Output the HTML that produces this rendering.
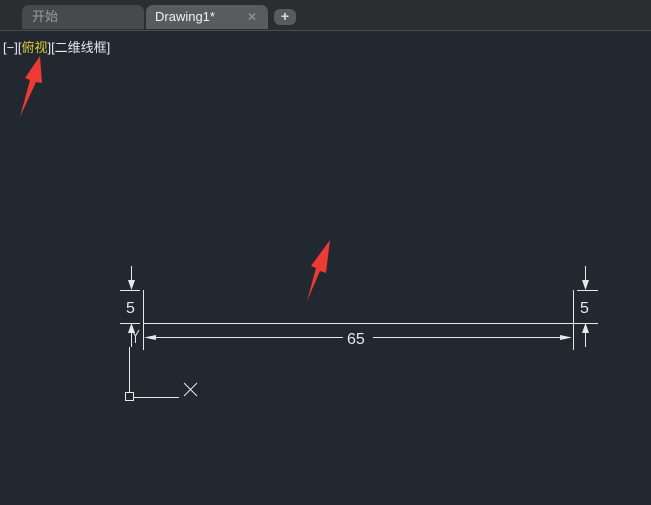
<!DOCTYPE html>
<html><head><meta charset="utf-8"><style>
body{margin:0;width:651px;height:505px;background:#212830;overflow:hidden;font-family:"Liberation Sans","Noto Sans CJK SC",sans-serif;position:relative}
.bar{position:absolute;left:0;top:0;width:651px;height:30px;background:#2b2d30;border-bottom:1px solid #4a4c50}
.tab{position:absolute;top:5px;height:24px;border-radius:7px 7px 0 0;font-size:13px;line-height:24px}
.vt{position:absolute;left:3px;top:37px;font-size:13px;color:#e8e8e8;white-space:nowrap}
</style></head><body>
<div class="bar">
<div class="tab" style="left:22px;width:122px;background:#47494c;color:#9a9a9a;padding-left:10px;box-sizing:border-box">开始</div>
<div class="tab" style="left:146px;width:122px;background:#595b5e;color:#f0f0f0;padding-left:9px;box-sizing:border-box">Drawing1*<span style="position:absolute;left:101px;color:#999;font-size:12px">✕</span></div>
<div class="tab" style="left:274px;top:9px;width:22px;height:16px;border-radius:6px;background:#595b5e;color:#ddd;font-size:14px;line-height:15px;text-align:center;font-weight:bold">+</div>
</div>
<div class="vt">[−][<span style="color:#d8c83a">俯视</span>][二维线框]</div>
<svg width="651" height="505" style="position:absolute;left:0;top:0">
<g stroke="#e8e8e8" stroke-width="1" fill="none">
<path d="M143.5 290V350M573.5 290V350M143 323.5H598M120 290.5H140M120 323.5H140M577 290.5H598M147 337.5H343M373 337.5H570M131.5 266V286M131.5 327V347M585.5 266V286M585.5 327V347"/>
<path d="M129.5 347V393M134 397.5H179M184 383L197 396M197 383L184 396"/>
<rect x="125.5" y="392.5" width="8" height="8"/>
<path d="M132 330L135.5 336L139 330M135.5 336V343"/>
</g>
<g fill="#e8e8e8">
<path d="M128 280L135 280L131.5 290Z"/><path d="M128 333L135 333L131.5 323Z"/>
<path d="M582 280L589 280L585.5 290Z"/><path d="M582 333L589 333L585.5 323Z"/>
<path d="M144 337.5L156 335L156 340Z"/><path d="M572 337.5L560 335L560 340Z"/>
</g>
<g fill="#e8e8e8" font-family="Liberation Sans" font-size="16">
<text x="126" y="313">5</text><text x="580" y="313">5</text><text x="347" y="344">65</text>
</g>
<g fill="#ee3a35">
<path d="M20 117L30 80L25 78L40 56L42 83L36 82Z"/>
<path d="M307 301L316 268L311 266L330 240L326 273L320 271Z"/>
</g>
</svg>
</body></html>
